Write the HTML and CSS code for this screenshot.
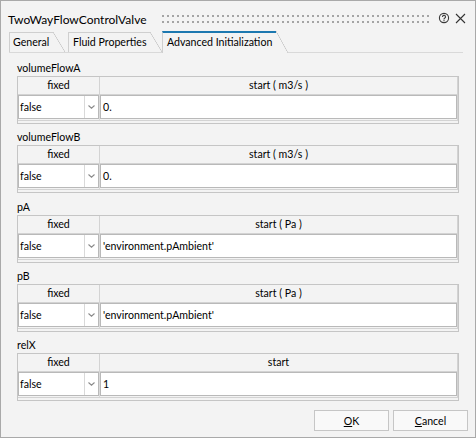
FILE: index.html
```html
<!DOCTYPE html>
<html>
<head>
<meta charset="utf-8">
<link rel="stylesheet" href="styles.css">
</head>
<body>
<div class="dialog">
  <div class="titlebar">
    <span class="title">TwoWayFlowControlValve</span>
    <span class="grip"></span>
    <svg class="help" width="12" height="12" viewBox="0 0 12 12"><circle cx="6" cy="6" r="4.6" fill="none" stroke="#3a3a3a" stroke-width="1.1"/><path d="M4.5 4.9 a1.5 1.5 0 1 1 2.3 1.2 c-0.6 0.35 -0.8 0.6 -0.8 1.2 v0.3" fill="none" stroke="#3a3a3a" stroke-width="1.1"/><rect x="5.45" y="8.1" width="1.1" height="1.1" fill="#3a3a3a"/></svg>
    <svg class="close" width="11" height="11" viewBox="0 0 11 11"><path d="M1 1 L10 10 M10 1 L1 10" stroke="#333" stroke-width="1.1" fill="none"/></svg>
  </div>
  <div class="tabs">
    <div class="tab t-general">General</div>
    <div class="tab t-fluid">Fluid Properties</div>
    <div class="tab tab-active t-adv">Advanced Initialization</div>
  </div>
  <div class="content">
    <section class="param">
      <div class="label">volumeFlowA</div>
      <div class="table">
        <div class="thead"><div class="th th-fixed">fixed</div><div class="th th-start">start ( m3/s )</div></div>
        <div class="trow">
          <div class="cell cell-fixed"><div class="combo"><span class="combo-text">false</span><span class="combo-btn"><svg width="7" height="4" viewBox="0 0 7 4"><path d="M0.5 0.5 L3.5 3.2 L6.5 0.5" fill="none" stroke="#8a8a8a" stroke-width="1.1"/></svg></span></div></div>
          <div class="cell cell-start"><div class="edit">0.</div></div>
        </div>
      </div>
    </section>
    <section class="param">
      <div class="label">volumeFlowB</div>
      <div class="table">
        <div class="thead"><div class="th th-fixed">fixed</div><div class="th th-start">start ( m3/s )</div></div>
        <div class="trow">
          <div class="cell cell-fixed"><div class="combo"><span class="combo-text">false</span><span class="combo-btn"><svg width="7" height="4" viewBox="0 0 7 4"><path d="M0.5 0.5 L3.5 3.2 L6.5 0.5" fill="none" stroke="#8a8a8a" stroke-width="1.1"/></svg></span></div></div>
          <div class="cell cell-start"><div class="edit">0.</div></div>
        </div>
      </div>
    </section>
    <section class="param">
      <div class="label">pA</div>
      <div class="table">
        <div class="thead"><div class="th th-fixed">fixed</div><div class="th th-start">start ( Pa )</div></div>
        <div class="trow">
          <div class="cell cell-fixed"><div class="combo"><span class="combo-text">false</span><span class="combo-btn"><svg width="7" height="4" viewBox="0 0 7 4"><path d="M0.5 0.5 L3.5 3.2 L6.5 0.5" fill="none" stroke="#8a8a8a" stroke-width="1.1"/></svg></span></div></div>
          <div class="cell cell-start"><div class="edit">'environment.pAmbient'</div></div>
        </div>
      </div>
    </section>
    <section class="param">
      <div class="label">pB</div>
      <div class="table">
        <div class="thead"><div class="th th-fixed">fixed</div><div class="th th-start">start ( Pa )</div></div>
        <div class="trow">
          <div class="cell cell-fixed"><div class="combo"><span class="combo-text">false</span><span class="combo-btn"><svg width="7" height="4" viewBox="0 0 7 4"><path d="M0.5 0.5 L3.5 3.2 L6.5 0.5" fill="none" stroke="#8a8a8a" stroke-width="1.1"/></svg></span></div></div>
          <div class="cell cell-start"><div class="edit">'environment.pAmbient'</div></div>
        </div>
      </div>
    </section>
    <section class="param">
      <div class="label">relX</div>
      <div class="table">
        <div class="thead"><div class="th th-fixed">fixed</div><div class="th th-start">start</div></div>
        <div class="trow">
          <div class="cell cell-fixed"><div class="combo"><span class="combo-text">false</span><span class="combo-btn"><svg width="7" height="4" viewBox="0 0 7 4"><path d="M0.5 0.5 L3.5 3.2 L6.5 0.5" fill="none" stroke="#8a8a8a" stroke-width="1.1"/></svg></span></div></div>
          <div class="cell cell-start"><div class="edit">1</div></div>
        </div>
      </div>
    </section>
  </div>
  <div class="footer">
    <button class="btn"><u>O</u>K</button>
    <button class="btn"><u>C</u>ancel</button>
  </div>
</div>
</body>
</html>
```

FILE: styles.css
```css
* { box-sizing: border-box; }
html, body { margin: 0; padding: 0; }
body {
  font-family: Lato, "Noto Sans", sans-serif;
  font-size: 10.6px;
  color: #000;
  background: #f3f3f3;
}
.dialog {
  width: 476px;
  height: 438px;
  border: 1px solid #a9a9a9;
  background: #f3f3f3;
  display: flex;
  flex-direction: column;
}
.titlebar {
  height: 30px;
  padding: 6px 0 0 7px;
  display: flex;
  align-items: center;
}
.title { font-size: 12px; white-space: nowrap; }
.grip {
  flex: 1;
  height: 8px;
  margin: 0 9px 0 15px;
  background-image: linear-gradient(90deg, #a4a4a4 2px, transparent 2px), linear-gradient(90deg, #a4a4a4 2px, transparent 2px);
  background-size: 5px 2px, 5px 2px;
  background-repeat: repeat-x, repeat-x;
  background-position: 0 0, 0 6px;
}
.help { margin-right: 5px; margin-top: -2px; }
.close { margin-right: 9px; margin-top: -2px; }

.tabs {
  height: 22px;
  display: flex;
  align-items: flex-end;
  margin: 0 12px 0 8px;
  border-bottom: 1px solid #d9d9d9;
}
.tab {
  position: relative;
  height: 20px;
  border-style: solid;
  border-color: #cfcfcf;
  border-width: 1px 0 0 1px;
  padding-left: 4px;
  line-height: 18px;
  white-space: nowrap;
}
.tab::after {
  content: "";
  position: absolute;
  left: 100%;
  top: -1px;
  width: 12px;
  height: 20px;
  background: linear-gradient(to top right, transparent calc(50% - 0.6px), #c8c8c8 calc(50% - 0.1px), #c8c8c8 calc(50% + 0.1px), transparent calc(50% + 0.6px));
}
.t-general { width: 44px; margin-right: 15px; padding-left: 3px; }
.t-fluid { width: 82px; margin-right: 12px; }
.t-adv { width: 114px; }
.tab-active {
  height: 22px;
  margin-bottom: -1px;
  border-top: 2px solid #1c78b0;
  background: #f3f3f3;
  z-index: 1;
  line-height: 19px;
}
.tab-active::after {
  top: -2px;
  height: 22px;
  background: linear-gradient(to top right, #f3f3f3 calc(50% - 0.6px), #c8c8c8 calc(50% - 0.1px), #c8c8c8 calc(50% + 0.1px), transparent calc(50% + 0.6px));
}

.content {
  padding: 7px 16px 0;
  display: flex;
  flex-direction: column;
  gap: 5.25px;
}
.label { height: 16px; line-height: 16px; }
.table {
  height: 48px;
  border: 1px solid #c5c5c5;
}
.thead {
  display: flex;
  height: 18px;
  border-bottom: 1px solid #d3d3d3;
  border-right: 1px solid #d3d3d3;
}
.th { line-height: 17px; text-align: center; }
.th-fixed { width: 82px; border-right: 1px solid #d3d3d3; }
.th-start { flex: 1; }
.trow {
  display: flex;
  height: 26px;
  border-bottom: 1px solid #d3d3d3;
  border-right: 1px solid #d3d3d3;
}
.cell-fixed { width: 82px; border-right: 1px solid #dadada; }
.cell-start { flex: 1; display: flex; }
.combo {
  display: flex;
  width: 81px;
  height: 24px;
  background: #fff;
  border: 1px solid #b9b9b9;
}
.combo-text { flex: 1; padding-left: 1px; line-height: 22px; }
.combo-btn {
  width: 14px;
  border-left: 1px solid #d9d9d9;
  display: flex;
  align-items: center;
  justify-content: center;
}
.edit {
  flex: 1;
  height: 24px;
  background: #fff;
  border: 1px solid #b9b9b9;
  padding-left: 2px;
  line-height: 22px;
  white-space: nowrap;
}
.footer {
  margin-top: auto;
  display: flex;
  justify-content: flex-end;
  gap: 4px;
  padding: 0 7px 6px 0;
}
.btn {
  width: 75px;
  height: 21px;
  padding: 0;
  border: 1px solid #c6c6c6;
  background: #f9f9f9;
  font: inherit;
  color: #000;
}
```
